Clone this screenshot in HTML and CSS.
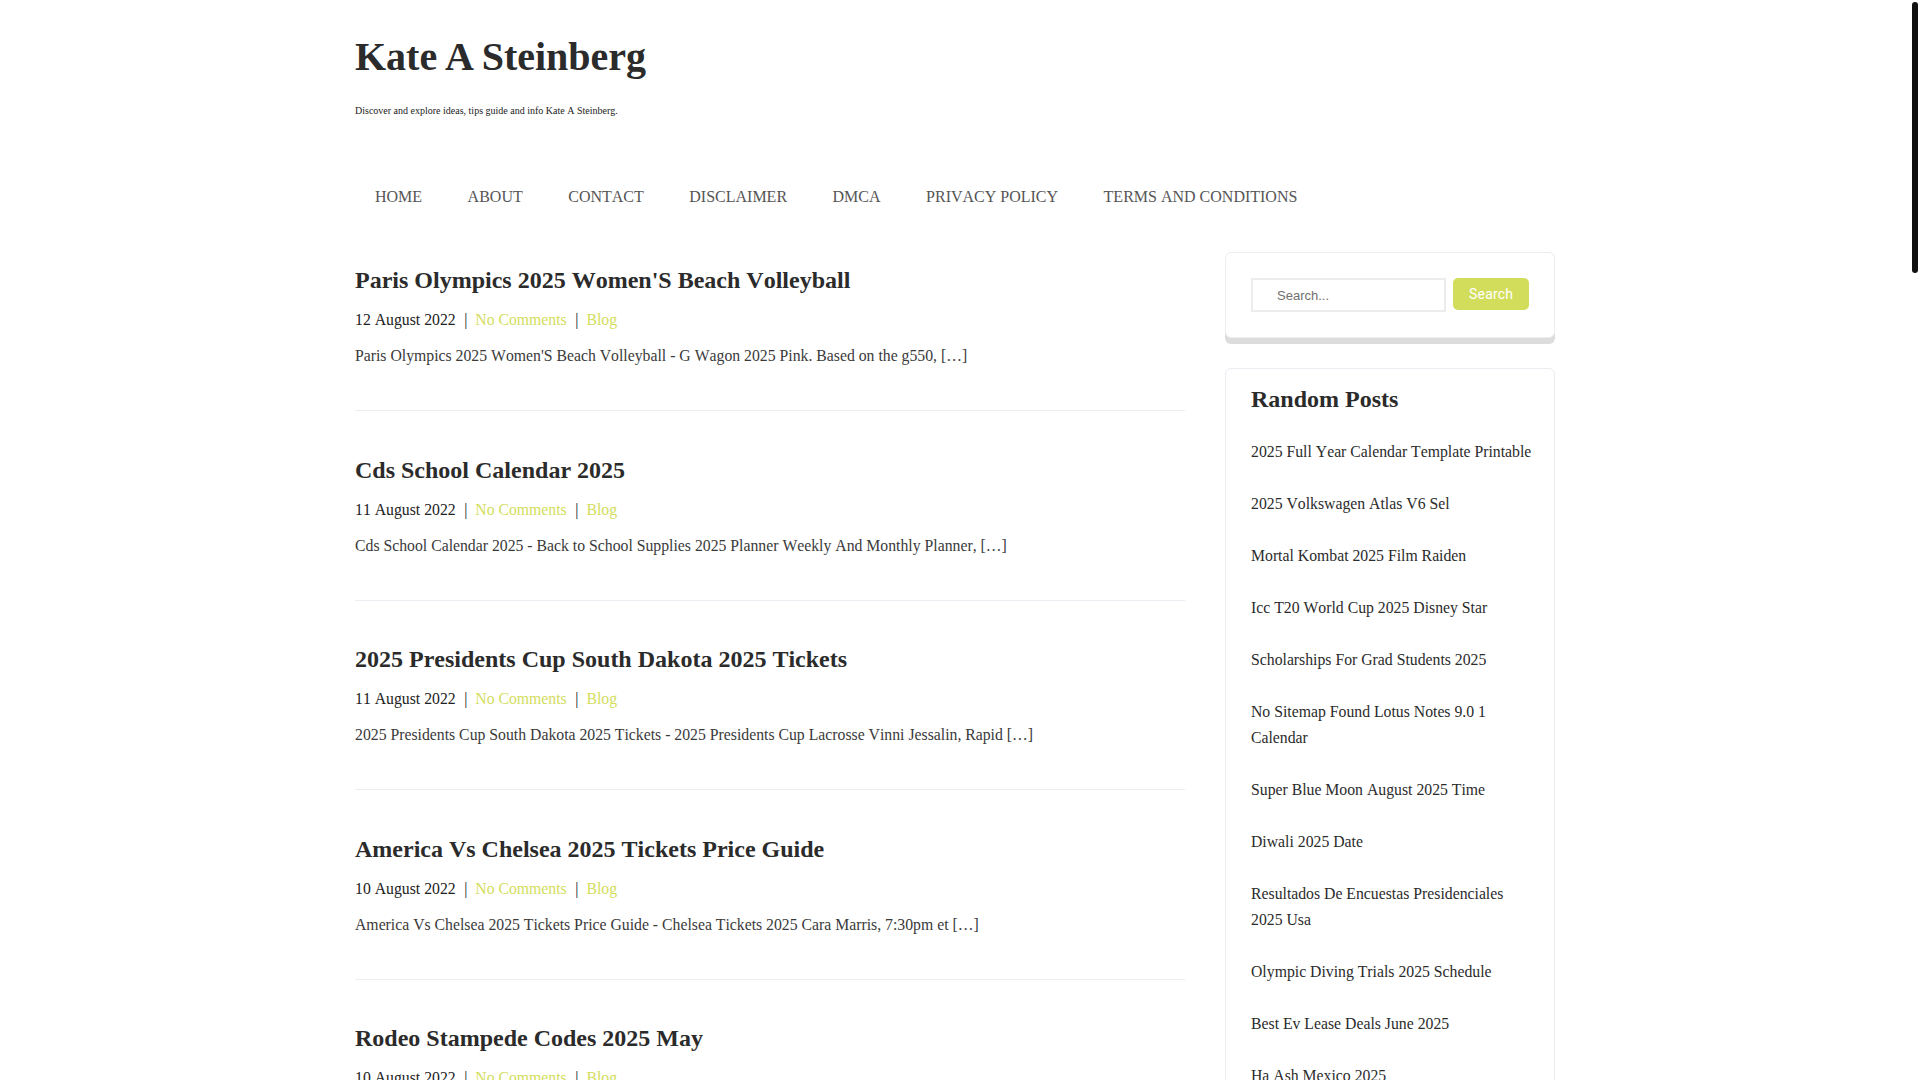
FILE: index.html
```html
<!DOCTYPE html>
<html lang="en">
<head>
  <meta charset="UTF-8" />
  <title>Kate A Steinberg</title>
  <link rel="stylesheet" href="styles.css">
</head>
<body>

  <!-- page scroll indicator -->
  <div class="scroll-thumb" aria-hidden="true"></div>

  <header class="site-header">
    <h1 class="site-title"><a href="#">Kate A Steinberg</a></h1>
    <p class="site-desc">Discover and explore ideas, tips guide and info Kate A Steinberg.</p>

    <nav class="main-nav">
      <ul>
        <li><a href="#">HOME</a></li>
        <li><a href="#">ABOUT</a></li>
        <li><a href="#">CONTACT</a></li>
        <li><a href="#">DISCLAIMER</a></li>
        <li><a href="#">DMCA</a></li>
        <li><a href="#">PRIVACY POLICY</a></li>
        <li><a href="#">TERMS AND CONDITIONS</a></li>
      </ul>
    </nav>
  </header>

  <div class="site-content">
    <main class="posts">

      <article class="post">
        <h2 class="post-title"><a href="#">Paris Olympics 2025 Women'S Beach Volleyball</a></h2>
        <div class="post-meta">12 August 2022<span class="sep">|</span><a href="#">No Comments</a><span class="sep">|</span><a href="#">Blog</a></div>
        <p class="post-excerpt">Paris Olympics 2025 Women'S Beach Volleyball - G Wagon 2025 Pink. Based on the g550, [&hellip;]</p>
      </article>

      <article class="post">
        <h2 class="post-title"><a href="#">Cds School Calendar 2025</a></h2>
        <div class="post-meta">11 August 2022<span class="sep">|</span><a href="#">No Comments</a><span class="sep">|</span><a href="#">Blog</a></div>
        <p class="post-excerpt">Cds School Calendar 2025 - Back to School Supplies 2025 Planner Weekly And Monthly Planner, [&hellip;]</p>
      </article>

      <article class="post">
        <h2 class="post-title"><a href="#">2025 Presidents Cup South Dakota 2025 Tickets</a></h2>
        <div class="post-meta">11 August 2022<span class="sep">|</span><a href="#">No Comments</a><span class="sep">|</span><a href="#">Blog</a></div>
        <p class="post-excerpt">2025 Presidents Cup South Dakota 2025 Tickets - 2025 Presidents Cup Lacrosse Vinni Jessalin, Rapid [&hellip;]</p>
      </article>

      <article class="post">
        <h2 class="post-title"><a href="#">America Vs Chelsea 2025 Tickets Price Guide</a></h2>
        <div class="post-meta">10 August 2022<span class="sep">|</span><a href="#">No Comments</a><span class="sep">|</span><a href="#">Blog</a></div>
        <p class="post-excerpt">America Vs Chelsea 2025 Tickets Price Guide - Chelsea Tickets 2025 Cara Marris, 7:30pm et [&hellip;]</p>
      </article>

      <article class="post">
        <h2 class="post-title"><a href="#">Rodeo Stampede Codes 2025 May</a></h2>
        <div class="post-meta">10 August 2022<span class="sep">|</span><a href="#">No Comments</a><span class="sep">|</span><a href="#">Blog</a></div>
        <p class="post-excerpt">Rodeo Stampede Codes 2025 May - Rodeo Stampede Codes 2025 Free Gems, New Update [&hellip;]</p>
      </article>

      <article class="post">
        <h2 class="post-title"><a href="#">Nfl Draft 2025 Mock Draft Simulator</a></h2>
        <div class="post-meta">10 August 2022<span class="sep">|</span><a href="#">No Comments</a><span class="sep">|</span><a href="#">Blog</a></div>
        <p class="post-excerpt">Nfl Draft 2025 Mock Draft Simulator - Mock Draft 2025 Nfl Simulator Jerry Louella, [&hellip;]</p>
      </article>

      <article class="post">
        <h2 class="post-title"><a href="#">Honda Civic Type R 2025 Price</a></h2>
        <div class="post-meta">9 August 2022<span class="sep">|</span><a href="#">No Comments</a><span class="sep">|</span><a href="#">Blog</a></div>
        <p class="post-excerpt">Honda Civic Type R 2025 Price - 2025 Honda Civic Type R Specs, Release Date [&hellip;]</p>
      </article>

      <article class="post">
        <h2 class="post-title"><a href="#">Easter Sunday 2025 Date Uk</a></h2>
        <div class="post-meta">9 August 2022<span class="sep">|</span><a href="#">No Comments</a><span class="sep">|</span><a href="#">Blog</a></div>
        <p class="post-excerpt">Easter Sunday 2025 Date Uk - When Is Easter 2025 In The Uk, Bank Holidays [&hellip;]</p>
      </article>

      <article class="post">
        <h2 class="post-title"><a href="#">Taylor Swift Eras Tour 2025 Setlist</a></h2>
        <div class="post-meta">9 August 2022<span class="sep">|</span><a href="#">No Comments</a><span class="sep">|</span><a href="#">Blog</a></div>
        <p class="post-excerpt">Taylor Swift Eras Tour 2025 Setlist - The Eras Tour Setlist 2025 Surprise Songs, [&hellip;]</p>
      </article>

      <article class="post">
        <h2 class="post-title"><a href="#">Kia Sportage 2025 Hybrid Review</a></h2>
        <div class="post-meta">8 August 2022<span class="sep">|</span><a href="#">No Comments</a><span class="sep">|</span><a href="#">Blog</a></div>
        <p class="post-excerpt">Kia Sportage 2025 Hybrid Review - 2025 Kia Sportage Hybrid Fuel Economy, Interior [&hellip;]</p>
      </article>

      <article class="post">
        <h2 class="post-title"><a href="#">Chinese New Year 2025 Animal Sign</a></h2>
        <div class="post-meta">8 August 2022<span class="sep">|</span><a href="#">No Comments</a><span class="sep">|</span><a href="#">Blog</a></div>
        <p class="post-excerpt">Chinese New Year 2025 Animal Sign - Year Of The Snake 2025 Meaning, Dates [&hellip;]</p>
      </article>

      <article class="post">
        <h2 class="post-title"><a href="#">Best Budget Laptops 2025 For Students</a></h2>
        <div class="post-meta">8 August 2022<span class="sep">|</span><a href="#">No Comments</a><span class="sep">|</span><a href="#">Blog</a></div>
        <p class="post-excerpt">Best Budget Laptops 2025 For Students - Top Picks Under 500 Dollars, Battery Life [&hellip;]</p>
      </article>

      <article class="post">
        <h2 class="post-title"><a href="#">Ncaa Basketball Tournament 2025 Bracket</a></h2>
        <div class="post-meta">7 August 2022<span class="sep">|</span><a href="#">No Comments</a><span class="sep">|</span><a href="#">Blog</a></div>
        <p class="post-excerpt">Ncaa Basketball Tournament 2025 Bracket - March Madness 2025 Printable Bracket, [&hellip;]</p>
      </article>

      <article class="post">
        <h2 class="post-title"><a href="#">Toyota 4runner 2025 Redesign</a></h2>
        <div class="post-meta">7 August 2022<span class="sep">|</span><a href="#">No Comments</a><span class="sep">|</span><a href="#">Blog</a></div>
        <p class="post-excerpt">Toyota 4runner 2025 Redesign - All New 2025 Toyota 4runner Trim Levels, Price [&hellip;]</p>
      </article>

      <article class="post">
        <h2 class="post-title"><a href="#">Pantone Color Of The Year 2025</a></h2>
        <div class="post-meta">7 August 2022<span class="sep">|</span><a href="#">No Comments</a><span class="sep">|</span><a href="#">Blog</a></div>
        <p class="post-excerpt">Pantone Color Of The Year 2025 - Peach Fuzz Palette Ideas For Home, Fashion [&hellip;]</p>
      </article>

      <article class="post">
        <h2 class="post-title"><a href="#">Mlb Opening Day 2025 Schedule</a></h2>
        <div class="post-meta">6 August 2022<span class="sep">|</span><a href="#">No Comments</a><span class="sep">|</span><a href="#">Blog</a></div>
        <p class="post-excerpt">Mlb Opening Day 2025 Schedule - Every Team's First Game, Times And Tickets [&hellip;]</p>
      </article>

      <article class="post">
        <h2 class="post-title"><a href="#">Federal Holidays 2025 Calendar Printable</a></h2>
        <div class="post-meta">6 August 2022<span class="sep">|</span><a href="#">No Comments</a><span class="sep">|</span><a href="#">Blog</a></div>
        <p class="post-excerpt">Federal Holidays 2025 Calendar Printable - Us Holiday List 2025 Free Download, [&hellip;]</p>
      </article>

      <article class="post">
        <h2 class="post-title"><a href="#">Subaru Outback 2025 Wilderness Edition</a></h2>
        <div class="post-meta">6 August 2022<span class="sep">|</span><a href="#">No Comments</a><span class="sep">|</span><a href="#">Blog</a></div>
        <p class="post-excerpt">Subaru Outback 2025 Wilderness Edition - Off Road Package 2025 Specs, Colors [&hellip;]</p>
      </article>

      <article class="post">
        <h2 class="post-title"><a href="#">Disney World Crowd Calendar 2025</a></h2>
        <div class="post-meta">5 August 2022<span class="sep">|</span><a href="#">No Comments</a><span class="sep">|</span><a href="#">Blog</a></div>
        <p class="post-excerpt">Disney World Crowd Calendar 2025 - Best Times To Visit Disney 2025, Park Hours [&hellip;]</p>
      </article>

      <article class="post">
        <h2 class="post-title"><a href="#">World Cup 2025 Club Teams List</a></h2>
        <div class="post-meta">5 August 2022<span class="sep">|</span><a href="#">No Comments</a><span class="sep">|</span><a href="#">Blog</a></div>
        <p class="post-excerpt">World Cup 2025 Club Teams List - Club World Cup 2025 Groups, Venues And Dates [&hellip;]</p>
      </article>

      <div class="pagination">
        <span class="current">1</span>
        <a href="#">2</a>
        <a href="#">3</a>
        <a href="#">Next &raquo;</a>
      </div>
    </main>

    <aside class="sidebar">
      <div class="widget widget-search">
        <form class="search-form">
          <input type="search" placeholder="Search...">
          <button type="submit">Search</button>
        </form>
      </div>

      <div class="widget">
        <h3 class="widget-title">Random Posts</h3>
        <ul class="widget-list">
          <li><a href="#">2025 Full Year Calendar Template Printable</a></li>
          <li><a href="#">2025 Volkswagen Atlas V6 Sel</a></li>
          <li><a href="#">Mortal Kombat 2025 Film Raiden</a></li>
          <li><a href="#">Icc T20 World Cup 2025 Disney Star</a></li>
          <li><a href="#">Scholarships For Grad Students 2025</a></li>
          <li><a href="#">No Sitemap Found Lotus Notes 9.0 1 Calendar</a></li>
          <li><a href="#">Super Blue Moon August 2025 Time</a></li>
          <li><a href="#">Diwali 2025 Date</a></li>
          <li><a href="#">Resultados De Encuestas Presidenciales 2025 Usa</a></li>
          <li><a href="#">Olympic Diving Trials 2025 Schedule</a></li>
          <li><a href="#">Best Ev Lease Deals June 2025</a></li>
          <li><a href="#">Ha Ash Mexico 2025</a></li>
          <li><a href="#">Nhl Trade Deadline 2025 Date</a></li>
          <li><a href="#">Ford Bronco Raptor 2025 Price</a></li>
          <li><a href="#">Cherry Blossom Forecast 2025 Dc</a></li>
        </ul>
      </div>
    </aside>
  </div>

  <footer class="site-footer">
    Copyright &copy; 2025 Kate A Steinberg. All rights reserved.
  </footer>

</body>
</html>
```

FILE: styles.css
```css
* {
  box-sizing: border-box;
}

body {
  margin: 0;
  padding-right: 10px;
  font-family: "Liberation Serif", "Times New Roman", serif;
  font-size: 16px;
  font-kerning: none;
  color: #2b2b2b;
  background: #fff;
}

a {
  color: inherit;
  text-decoration: none;
}

.scroll-thumb {
  position: fixed;
  top: 2px;
  right: 2px;
  width: 6px;
  height: 271px;
  border-radius: 3px;
  background: #111;
  z-index: 50;
}

.site-header {
  width: 1200px;
  margin: 0 auto;
  padding-top: 33px;
}

.site-title {
  margin: 0;
  font-size: 40px;
  line-height: 48px;
  font-weight: 700;
  font-kerning: normal;
  color: #2b2b2b;
}

.site-desc {
  margin: 22px 0 0;
  font-size: 10px;
  line-height: 15px;
  color: #222;
}

.main-nav {
  margin-top: 54px;
}

.main-nav ul {
  list-style: none;
  margin: 0;
  padding: 0;
  display: flex;
  gap: 5.5px;
}

.main-nav a {
  display: block;
  padding: 0 20px;
  line-height: 50px;
  font-size: 16px;
  color: #555;
}

.site-content {
  width: 1200px;
  margin: 30px auto 0;
  display: grid;
  grid-template-columns: 830px 330px;
  gap: 40px;
  align-items: start;
}

.post {
  padding: 12px 0 41px;
  margin-bottom: 30.5px;
  border-bottom: 1px solid #ececf2;
}

.post-title {
  margin: 0 0 11px;
  font-size: 24px;
  line-height: 32px;
  font-weight: 700;
  color: #2b2b2b;
}

.post-meta {
  font-size: 15.75px;
  line-height: 26px;
  color: #222;
}

.post-meta a {
  color: #d3dd5c;
}

.post-meta .sep {
  margin: 0 8px 0 8.5px;
  color: #222;
}

.post-excerpt {
  margin: 10px 0 0;
  font-size: 15.75px;
  line-height: 26px;
  color: #3a3a3a;
}

.pagination {
  display: flex;
  gap: 8px;
  margin: 10px 0 60px;
}

.pagination a,
.pagination span {
  padding: 8px 14px;
  border: 1px solid #ececf2;
  border-radius: 4px;
  color: #2b2b2b;
}

.pagination .current {
  background: #d3dd5c;
  border-color: #d3dd5c;
  color: #fff;
}

.widget {
  background: #fff;
  border: 1px solid #ececf2;
  border-radius: 6px;
  padding: 16px 20px 25px 25px;
  margin-bottom: 30px;
}

.widget-search {
  padding: 25px;
  box-shadow: 0 6px 0 #dcdcdc;
}

.search-form {
  display: flex;
  align-items: flex-start;
  gap: 7px;
}

.search-form input {
  width: 195px;
  height: 34px;
  padding: 0 24px;
  border: 2px solid #ececec;
  font-family: "Liberation Sans", Arial, sans-serif;
  font-size: 13px;
  color: #333;
  outline: none;
}

.search-form input::placeholder {
  color: #707070;
}

.search-form button {
  height: 32px;
  padding: 0 16px;
  border: none;
  border-radius: 5px;
  background: #d3dd5c;
  color: #fff;
  font-family: Roboto, "Liberation Sans", sans-serif;
  font-size: 14px;
  letter-spacing: 0.2px;
  cursor: pointer;
}

.widget-title {
  margin: 0;
  font-size: 24px;
  line-height: 29px;
  font-weight: 700;
  color: #2b2b2b;
}

.widget-list {
  list-style: none;
  margin: 25px 0 0;
  padding: 0;
  font-size: 15.75px;
}

.widget-list li {
  line-height: 26px;
  margin-bottom: 26px;
  color: #2b2b2b;
}

.widget-list li:last-child {
  margin-bottom: 0;
}

.site-footer {
  width: 1200px;
  margin: 40px auto 0;
  padding: 30px 0;
  border-top: 1px solid #ececf2;
  text-align: center;
  font-size: 14px;
  color: #555;
}
```
